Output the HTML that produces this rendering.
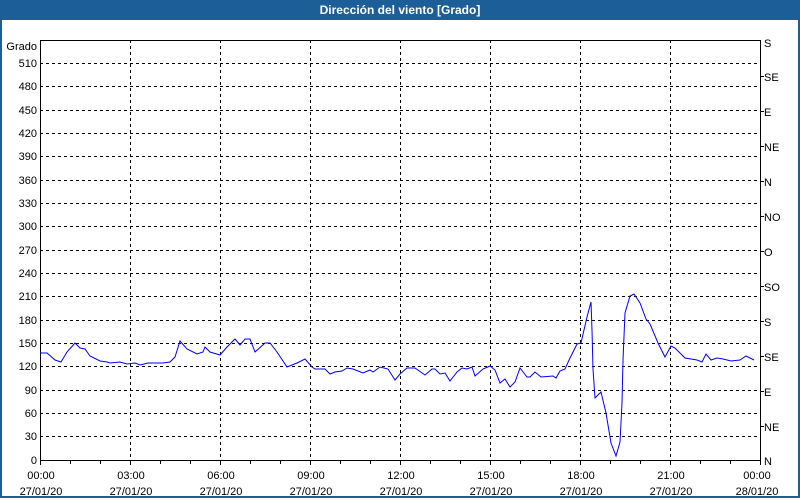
<!DOCTYPE html>
<html><head><meta charset="utf-8"><style>
html,body{margin:0;padding:0;}
body{width:800px;height:500px;overflow:hidden;background:#fff;font-family:"Liberation Sans","DejaVu Sans",sans-serif;}
.frame{position:absolute;left:0;top:0;width:796px;height:496px;border:2px solid #1c5e98;border-top:none;}
.title{position:absolute;left:0;top:0;width:800px;height:20px;background:#1c5e98;color:#fff;font-weight:bold;font-size:12px;line-height:20px;text-align:center;}
svg{position:absolute;left:0;top:0;}
svg text{font-family:"Liberation Sans","DejaVu Sans",sans-serif;font-size:11px;fill:#000;}
</style></head><body>
<div class="frame"></div>
<div class="title">Dirección del viento [Grado]</div>
<svg width="800" height="500">
<g stroke="#000" stroke-width="1" stroke-dasharray="3,3" fill="none">
<line x1="40" x2="760" y1="63.5" y2="63.5"/><line x1="40" x2="760" y1="86.5" y2="86.5"/><line x1="40" x2="760" y1="110.5" y2="110.5"/><line x1="40" x2="760" y1="133.5" y2="133.5"/><line x1="40" x2="760" y1="156.5" y2="156.5"/><line x1="40" x2="760" y1="180.5" y2="180.5"/><line x1="40" x2="760" y1="203.5" y2="203.5"/><line x1="40" x2="760" y1="226.5" y2="226.5"/><line x1="40" x2="760" y1="250.5" y2="250.5"/><line x1="40" x2="760" y1="273.5" y2="273.5"/><line x1="40" x2="760" y1="296.5" y2="296.5"/><line x1="40" x2="760" y1="320.5" y2="320.5"/><line x1="40" x2="760" y1="343.5" y2="343.5"/><line x1="40" x2="760" y1="366.5" y2="366.5"/><line x1="40" x2="760" y1="390.5" y2="390.5"/><line x1="40" x2="760" y1="413.5" y2="413.5"/><line x1="40" x2="760" y1="436.5" y2="436.5"/>
<line y1="40" y2="460" x1="130.5" x2="130.5"/><line y1="40" y2="460" x1="220.5" x2="220.5"/><line y1="40" y2="460" x1="310.5" x2="310.5"/><line y1="40" y2="460" x1="400.5" x2="400.5"/><line y1="40" y2="460" x1="490.5" x2="490.5"/><line y1="40" y2="460" x1="580.5" x2="580.5"/><line y1="40" y2="460" x1="670.5" x2="670.5"/>
</g>
<g stroke="#000" stroke-width="1" fill="none">
<path d="M40.5 40.5H760.5V460.5H40.5Z"/>
<path d="M40.5 460v5M70.5 460v4M100.5 460v4M130.5 460v5M160.5 460v4M190.5 460v4M220.5 460v5M250.5 460v4M280.5 460v4M310.5 460v5M340.5 460v4M370.5 460v4M400.5 460v5M430.5 460v4M460.5 460v4M490.5 460v5M520.5 460v4M550.5 460v4M580.5 460v5M610.5 460v4M640.5 460v4M670.5 460v5M700.5 460v4M730.5 460v4M760.5 460v5"/>
<path d="M760 76.5h4M760 111.5h4M760 146.5h4M760 181.5h4M760 216.5h4M760 251.5h4M760 286.5h4M760 321.5h4M760 356.5h4M760 391.5h4M760 426.5h4"/>
</g>
<polyline fill="none" stroke="#0000ff" stroke-width="1" points="40,353 47,353 55,360 61,362 67,352 75,343 80,348 85,349 90,356 100,361 107,362 110,363 120,362 127,364 135,363 140,365 148,363 163,363 170,362 175,357 180,341 187,349 197,354 203,352 205,347 210,352 220,355 227,347 235,339 240,345 245,339 250,339 255,352 265,343 270,343 277,352 287,367 297,363 305,359 312,367 315,369 325,369 330,374 335,372 342,371 347,368 353,369 358,371 363,373 370,370 373,372 380,367 388,369 395,380 400,374 407,368 415,368 425,375 432,369 435,369 440,374 445,373 450,381 457,372 462,368 467,369 472,367 475,376 483,369 490,366 495,370 500,383 505,379 510,387 515,382 520,368 527,377 530,377 535,372 541,377 553,376 556,378 560,371 565,369 570,358 577,344 581,343 587,317 591,302 592,330 593,369 595,398 601,392 606,413 611,443 616,456 620,442 622,403 623,360 625,313 630,296 634,294 640,303 646,319 650,324 658,343 665,357 671,346 675,348 685,358 697,360 702,362 706,354 711,360 717,358 723,359 731,361 740,360 746,356 754,360"/>
<g text-anchor="end">
<text x="37" y="50">Grado</text>
<text x="37" y="67">510</text><text x="37" y="90">480</text><text x="37" y="114">450</text><text x="37" y="137">420</text><text x="37" y="160">390</text><text x="37" y="184">360</text><text x="37" y="207">330</text><text x="37" y="230">300</text><text x="37" y="254">270</text><text x="37" y="277">240</text><text x="37" y="300">210</text><text x="37" y="324">180</text><text x="37" y="347">150</text><text x="37" y="370">120</text><text x="37" y="394">90</text><text x="37" y="417">60</text><text x="37" y="440">30</text><text x="37" y="464">0</text>
</g>
<g>
<text x="764" y="47">S</text><text x="764" y="81">SE</text><text x="764" y="116">E</text><text x="764" y="151">NE</text><text x="764" y="186">N</text><text x="764" y="221">NO</text><text x="764" y="256">O</text><text x="764" y="291">SO</text><text x="764" y="326">S</text><text x="764" y="361">SE</text><text x="764" y="396">E</text><text x="764" y="431">NE</text><text x="764" y="465">N</text>
</g>
<g text-anchor="middle">
<text x="41" y="479">00:00</text><text x="41" y="495">27/01/20</text>
<text x="131" y="479">03:00</text><text x="131" y="495">27/01/20</text>
<text x="221" y="479">06:00</text><text x="221" y="495">27/01/20</text>
<text x="311" y="479">09:00</text><text x="311" y="495">27/01/20</text>
<text x="401" y="479">12:00</text><text x="401" y="495">27/01/20</text>
<text x="491" y="479">15:00</text><text x="491" y="495">27/01/20</text>
<text x="581" y="479">18:00</text><text x="581" y="495">27/01/20</text>
<text x="671" y="479">21:00</text><text x="671" y="495">27/01/20</text>
<text x="757" y="479">00:00</text><text x="757" y="495">28/01/20</text>
</g>
</svg>
</body></html>
